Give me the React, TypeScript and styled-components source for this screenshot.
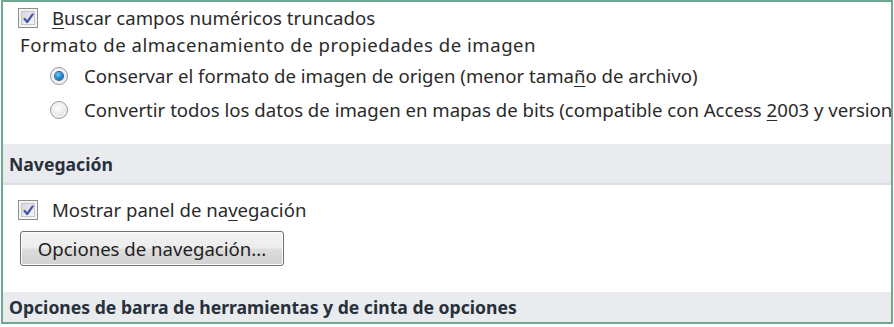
import * as React from "react";
import styled, { createGlobalStyle } from "styled-components";

const GlobalStyle = createGlobalStyle`
  html, body {
    margin: 0;
    padding: 0;
    background: #ffffff;
  }
  body {
    font-family: "Noto Sans", "Open Sans", sans-serif;
    color: #2a2a2a;
  }
`;

const Frame = styled.div`
  box-sizing: border-box;
  margin-left: 1px;
  width: 892px;
  height: 324px;
  border: 2px solid #6ea98f;
  overflow: hidden;
  display: flex;
  flex-direction: column;
  font-size: 18.6px;
`;

const Body = styled.div<{ $pt: number }>`
  display: flex;
  flex-direction: column;
  padding-top: ${(p) => p.$pt}px;
`;

const Row = styled.div<{ $indent: number; $h: number }>`
  display: flex;
  align-items: center;
  height: ${(p) => p.$h}px;
  padding-left: ${(p) => p.$indent}px;
  white-space: nowrap;
`;

const Label = styled.span<{ $gap?: number; $spacing?: number }>`
  margin-left: ${(p) => p.$gap ?? 0}px;
  letter-spacing: ${(p) => p.$spacing ?? 0}px;
  line-height: 1;
`;

const Key = styled.span`
  text-decoration: underline;
  text-underline-offset: 3px;
`;

const SectionHeader = styled.div<{ $h: number; $line?: boolean; $mt: string }>`
  height: ${(p) => p.$h}px;
  margin-top: ${(p) => p.$mt};
  background: #e9ebee;
  border-bottom: ${(p) => (p.$line ? "2px solid #dcdde9" : "none")};
  display: flex;
  align-items: center;
  padding-left: 6px;
  font-size: 17.6px;
  font-weight: 700;
  color: #27303b;
  white-space: nowrap;
  flex-shrink: 0;
`;

const CheckBox = styled.span`
  box-sizing: border-box;
  width: 20px;
  height: 20px;
  border: 1px solid #8f8f8f;
  background: linear-gradient(135deg, #cfd0d6 0%, #ececef 60%, #fbfbfb 100%);
  box-shadow: inset 0 0 0 2px #f4f4f4, inset 0 0 0 3px #c6c7ce;
  display: inline-flex;
  align-items: center;
  justify-content: center;
  flex-shrink: 0;
`;

const RadioOuter = styled.span`
  box-sizing: border-box;
  width: 18px;
  height: 18px;
  border-radius: 50%;
  border: 1px solid #9a9a9a;
  background: radial-gradient(circle at 45% 40%, #ffffff 0%, #e6e6e6 55%, #cfcfcf 100%);
  box-shadow: inset 0 0 0 2px #f2f2f2;
  display: inline-flex;
  align-items: center;
  justify-content: center;
  flex-shrink: 0;
`;

const RadioDot = styled.span`
  width: 8px;
  height: 8px;
  border-radius: 50%;
  background: radial-gradient(circle at 40% 35%, #6fd0f5 0%, #1a7fc6 55%, #0b4f8c 100%);
  box-shadow: 0 0 0 1px #2c5f93;
`;

const ButtonRow = styled.div`
  display: flex;
  padding: 9px 0 0 17px;
`;

const Button = styled.button`
  box-sizing: border-box;
  width: 264px;
  height: 35px;
  border: 1px solid #707070;
  border-radius: 3px;
  background: linear-gradient(
    to bottom,
    #f4f4f4 0%,
    #ececec 48%,
    #dddddd 52%,
    #d1d1d1 100%
  );
  box-shadow: inset 0 0 0 1px #fbfbfb;
  font-family: inherit;
  font-size: 18.6px;
  color: #1e1e1e;
  text-align: center;
  padding: 0;
`;

function Check() {
  return (
    <CheckBox>
      <svg width="13" height="13" viewBox="0 0 13 13">
        <path
          d="M2.5 6.8 L5.2 10 L10.6 2.4"
          fill="none"
          stroke="#4056a6"
          strokeWidth="2.2"
          strokeLinecap="round"
          strokeLinejoin="round"
        />
      </svg>
    </CheckBox>
  );
}

function Radio({ on }: { on?: boolean }) {
  return <RadioOuter>{on && <RadioDot />}</RadioOuter>;
}

export default function App() {
  return (
    <>
      <GlobalStyle />
      <Frame>
        <Body $pt={3}>
          <Row $indent={15} $h={26}>
            <Check />
            <Label $gap={14}>
              <Key>B</Key>uscar campos numéricos truncados
            </Label>
          </Row>
          <Row $indent={17} $h={28}>
            <Label $spacing={0.5}>Formato de almacenamiento de propiedades de imagen</Label>
          </Row>
          <Row $indent={47} $h={34}>
            <Radio on />
            <Label $gap={16}>
              Conservar el formato de imagen de origen (menor tama<Key>ñ</Key>o de archivo)
            </Label>
          </Row>
          <Row $indent={47} $h={34}>
            <Radio />
            <Label $gap={16}>
              Convertir todos los datos de imagen en mapas de bits (compatible con Access{" "}
              <Key>2</Key>003 y versiones posteriores)
            </Label>
          </Row>
        </Body>
        <SectionHeader $h={39} $line $mt="17px">
          Navegación
        </SectionHeader>
        <Body $pt={13}>
          <Row $indent={15} $h={24}>
            <Check />
            <Label $gap={14}>
              Mostrar panel de na<Key>v</Key>egación
            </Label>
          </Row>
          <ButtonRow>
            <Button>Opciones de navegación...</Button>
          </ButtonRow>
        </Body>
        <SectionHeader $h={30} $mt="auto">
          Opciones de barra de herramientas y de cinta de opciones
        </SectionHeader>
      </Frame>
    </>
  );
}
